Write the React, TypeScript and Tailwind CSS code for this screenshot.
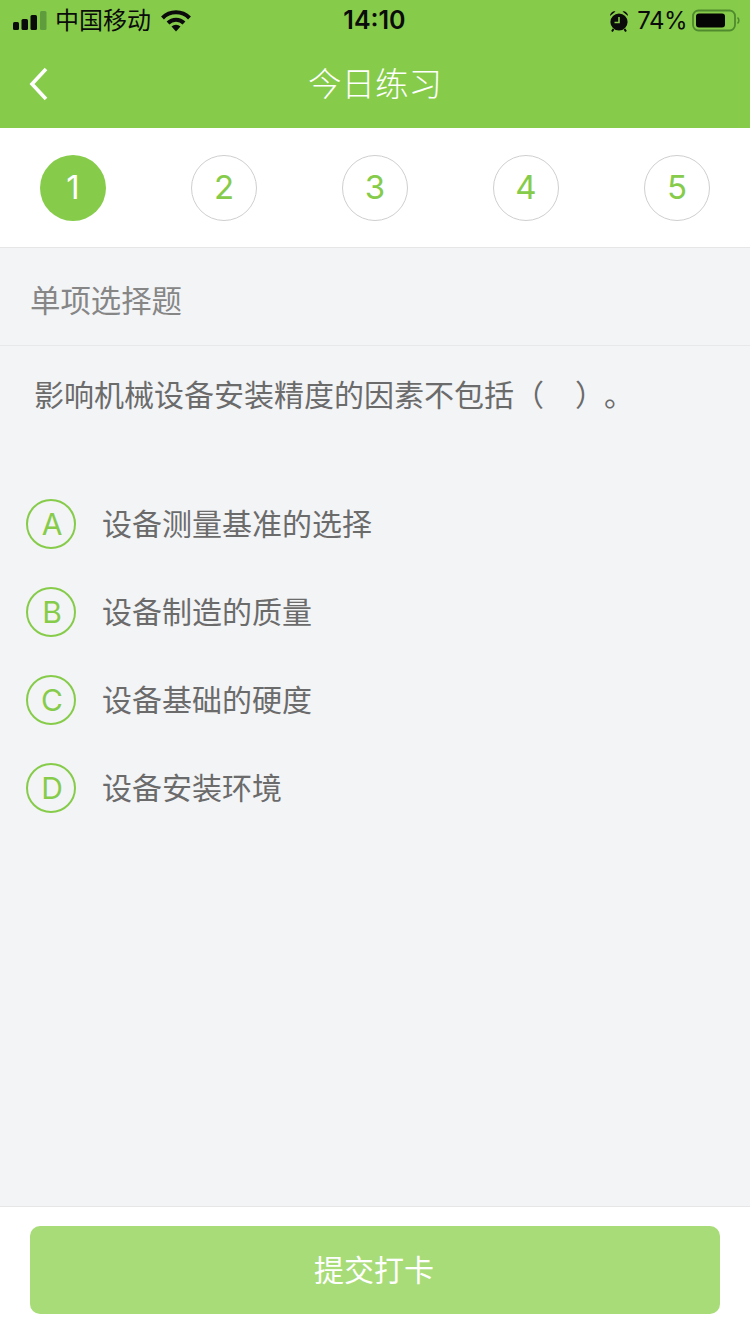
import React from "react";

const font = "font-['Inter','Noto_Sans_CJK_SC',sans-serif]";

function Signal() {
  return (
    <svg width="34" height="20" viewBox="0 0 34 20" className="block">
      <rect x="0" y="11" width="6" height="8" rx="1.5" fill="#0b0b0b" />
      <rect x="8.5" y="8" width="6.5" height="11" rx="1.5" fill="#0b0b0b" />
      <rect x="17.5" y="4" width="6.5" height="15" rx="1.5" fill="#0b0b0b" />
      <rect x="27" y="0" width="6.5" height="19" rx="1.5" fill="#5f9c3e" />
    </svg>
  );
}

function Wifi() {
  return (
    <svg width="30" height="22" viewBox="0 0 30 22" className="block">
      <path d="M1.5 8 A19 19 0 0 1 28.5 8" fill="none" stroke="#0b0b0b" strokeWidth="4" />
      <path d="M7 13 A11.5 11.5 0 0 1 23 13" fill="none" stroke="#0b0b0b" strokeWidth="4" />
      <path d="M10.5 16.5 A6.5 6.5 0 0 1 19.5 16.5 L15 21.5 Z" fill="#0b0b0b" />
    </svg>
  );
}

function Alarm() {
  return (
    <svg width="20" height="22" viewBox="0 0 20 22" className="block">
      <circle cx="10" cy="12" r="8.6" fill="#0b0b0b" />
      <path d="M10 7 V12.5 H5.5" fill="none" stroke="#86cc4a" strokeWidth="1.6" />
      <path d="M1 6 A4.5 4.5 0 0 1 6.5 1.5 Z M19 6 A4.5 4.5 0 0 0 13.5 1.5 Z" fill="#0b0b0b" />
      <path d="M4.5 19 L3 21.5 M15.5 19 L17 21.5" stroke="#0b0b0b" strokeWidth="2" />
    </svg>
  );
}

function Battery() {
  return (
    <svg width="48" height="24" viewBox="0 0 48 24" className="block">
      <rect x="1" y="1.5" width="42" height="20" rx="5.5" fill="none" stroke="#4f8a2e" strokeWidth="1.8" />
      <rect x="4" y="4.5" width="29" height="14" rx="3" fill="#050505" />
      <path d="M45.5 8.5 A4 4 0 0 1 45.5 14.5" fill="none" stroke="#4f8a2e" strokeWidth="1.6" />
    </svg>
  );
}

const steps = ["1", "2", "3", "4", "5"];
const options = [
  ["A", "设备测量基准的选择"],
  ["B", "设备制造的质量"],
  ["C", "设备基础的硬度"],
  ["D", "设备安装环境"],
];

export default function App() {
  return (
    <div className={`w-[750px] h-[1334px] flex flex-col bg-[#f3f4f6] overflow-hidden ${font}`}>
      <header className="h-[128px] shrink-0 bg-[#86cc4a] flex flex-col">
        <div className="h-[41px] flex items-center justify-between pl-[13px] pr-[10px] text-[#0b0b0b]">
          <div className="w-[260px] flex items-center">
            <Signal />
            <span className="ml-[8px] text-[24px] leading-none">中国移动</span>
            <span className="ml-[10px]"><Wifi /></span>
          </div>
          <span className="text-[25px] font-semibold leading-none -ml-[4px]">14:10</span>
          <div className="w-[260px] flex items-center justify-end">
            <Alarm />
            <span className="ml-[8px] text-[24px] leading-none tracking-[-0.5px]">74%</span>
            <span className="ml-[5px]"><Battery /></span>
          </div>
        </div>
        <div className="relative h-[87px] flex items-start justify-center">
          <svg width="20" height="34" viewBox="0 0 20 34" className="absolute left-[29px] top-[26px]">
            <path d="M17 2 L3 17 L17 32" fill="none" stroke="#fff" strokeWidth="3.6" />
          </svg>
          <h1 className="mt-[21px] text-[33.5px] leading-[44px] text-white font-light">今日练习</h1>
        </div>
      </header>

      <div className="h-[120px] shrink-0 bg-white border-b border-[#e6e6e6] flex items-center justify-between px-[40px]">
        {steps.map((s, i) => (
          <div
            key={s}
            className={
              i === 0
                ? "w-[66px] h-[66px] pt-[1px] rounded-full bg-[#86cc4a] text-white flex items-center justify-center text-[33px]"
                : "w-[66px] h-[66px] pt-[1px] rounded-full border border-[#cfcfcf] text-[#86cc4a] flex items-center justify-center text-[33px]"
            }
          >
            {s}
          </div>
        ))}
      </div>

      <div className="h-[98px] pt-[10px] shrink-0 border-b border-[#e8e8ea] flex items-center pl-[30px] text-[30.4px] text-[#868686]">
        单项选择题
      </div>

      <p className="mt-[29px] pl-[34px] text-[30px] leading-[40px] text-[#6b6b6b] whitespace-pre">影响机械设备安装精度的因素不包括（<span className="ml-[31px]">）</span><span className="ml-[14px]">。</span></p>

      <ul className="mt-[84px] flex-1 flex flex-col pl-[26px] gap-[38px]">
        {options.map(([k, t]) => (
          <li key={k} className="flex items-center h-[50px]">
            <span className="w-[50px] h-[50px] pl-[2px] rounded-full border-2 border-[#86cc4a] text-[#86cc4a] flex items-center justify-center text-[30px]">{k}</span>
            <span className="ml-[26px] text-[30px] text-[#6b6b6b]">{t}</span>
          </li>
        ))}
      </ul>

      <footer className="h-[128px] shrink-0 bg-white border-t border-[#e6e6e6] px-[30px] pt-[19px]">
        <button className="w-[690px] h-[88px] pr-[2px] rounded-[10px] bg-[#a8dc78] text-white text-[30px]">提交打卡</button>
      </footer>
    </div>
  );
}
